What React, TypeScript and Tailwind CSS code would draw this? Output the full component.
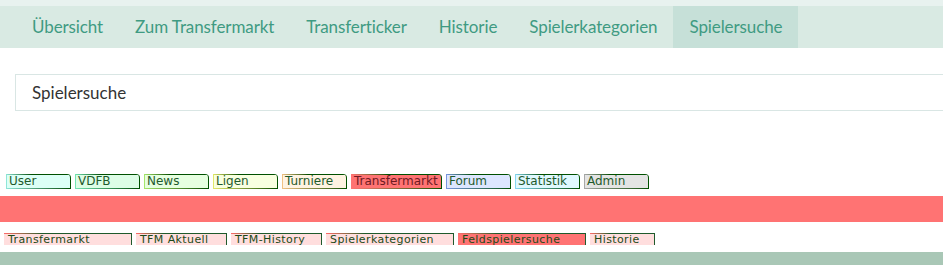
const navItems = ['Übersicht', 'Zum Transfermarkt', 'Transferticker', 'Historie', 'Spielerkategorien', 'Spielersuche']

const mainTabs = [
  {label: 'User', w: 'w-[65px]', bg: 'bg-[#dcfff6]', edge: 'border-l-[#8fe6d8]', line: 'from-[#8fe6d8]'},
  {label: 'VDFB', w: 'w-[65px]', bg: 'bg-[#ddfde6]', edge: 'border-l-[#74e6b4]', line: 'from-[#74e6b4]'},
  {label: 'News', w: 'w-[65px]', bg: 'bg-[#e6ffe0]', edge: 'border-l-[#a6e66a]', line: 'from-[#a6e66a]'},
  {label: 'Ligen', w: 'w-[65px]', bg: 'bg-[#f8ffe0]', edge: 'border-l-[#e2e86a]', line: 'from-[#e2e86a]'},
  {label: 'Turniere', w: 'w-[65px]', bg: 'bg-[#fff3e2]', edge: 'border-l-[#f2c284]', line: 'from-[#f2c284]'},
  {label: 'Transfermarkt', w: 'w-[91px]', bg: 'bg-[#ff7373] text-[#6e1a22]', edge: 'border-l-[#ff7373]', line: 'from-[#ff7373]'},
  {label: 'Forum', w: 'w-[65px]', bg: 'bg-[#dde6ff]', edge: 'border-l-[#7a96e0]', line: 'from-[#7a96e0]'},
  {label: 'Statistik', w: 'w-[65px]', bg: 'bg-[#e0f8ff]', edge: 'border-l-[#86d6f2]', line: 'from-[#86d6f2]'},
  {label: 'Admin', w: 'w-[65px]', bg: 'bg-[#e4e4e4]', edge: 'border-l-[#a8a8a8]', line: 'from-[#a8a8a8]'},
]

const subTabs = [
  {label: 'Transfermarkt', w: 'w-[128px]'},
  {label: 'TFM Aktuell', w: 'w-[91px]'},
  {label: 'TFM-History', w: 'w-[91px]'},
  {label: 'Spielerkategorien', w: 'w-[128px]'},
  {label: 'Feldspielersuche', w: 'w-[128px]', active: true},
  {label: 'Historie', w: 'w-[65px]'},
]

export default function App() {
  return (
    <div className="w-[943px] h-[265px] overflow-hidden bg-white">
      {/* top nav */}
      <div className="h-[6px] bg-[#e8f2ef]" />
      <nav className="flex h-[42px] bg-[#d9eae3] pl-4 font-['Lato',sans-serif] text-[17px] tracking-[-0.1px] text-[#3f9b82]">
        {navItems.map((item) => (
          <a key={item} className={`flex items-center px-4 ${item === 'Spielersuche' ? 'bg-[#c6e0d8]' : ''}`}>
            {item}
          </a>
        ))}
      </nav>

      {/* title box */}
      <div className="pt-[26px] pl-[15px]">
        <div className="h-[37px] flex items-center pl-[16px] border border-r-0 border-[#d9e6e4] font-['Lato',sans-serif] text-[17px] text-[#333]">
          Spielersuche
        </div>
      </div>

      {/* legacy tabs */}
      <div className="flex gap-[4px] pl-[6px] pt-[63px] font-['DejaVu_Sans',sans-serif] text-[12px] leading-[13px]">
        {mainTabs.map((t) => (
          <div
            key={t.label}
            className={`${t.w} h-[15px] flex flex-col border-r border-[#005000] rounded-tr-[4px] overflow-hidden text-[#1f5a2c] ${t.bg}`}
          >
            <div className={`h-px shrink-0 bg-gradient-to-r ${t.line} to-[#005000] to-40%`} />
            <div className={`flex-1 border-l ${t.edge} pl-[2px]`}>{t.label}</div>
            <div className={`h-px shrink-0 bg-gradient-to-r ${t.line} to-[#005000]`} />
          </div>
        ))}
      </div>
      <div className="mt-[7px] h-[26px] bg-[#ff7373]" />

      <div className="flex gap-[4px] pl-[4px] pt-[11px] font-['DejaVu_Sans',sans-serif] text-[11px] leading-[11px] tracking-[0.4px]">
        {subTabs.map((t) => (
          <div
            key={t.label}
            className={`${t.w} h-[12px] flex flex-col border-r border-[#1f5a2c] text-[#1c4a18] ${t.active ? 'bg-[#ff7373]' : 'bg-[#ffdede]'}`}
          >
            <div className="h-px shrink-0 bg-gradient-to-r from-[#ff6a6a] to-[#1f5a2c] to-30%" />
            <div className="pl-[4px] overflow-hidden whitespace-nowrap">{t.label}</div>
          </div>
        ))}
      </div>
      <div className="mt-[7px] h-[13px] bg-[#a9c7b6]" />
    </div>
  )
}
